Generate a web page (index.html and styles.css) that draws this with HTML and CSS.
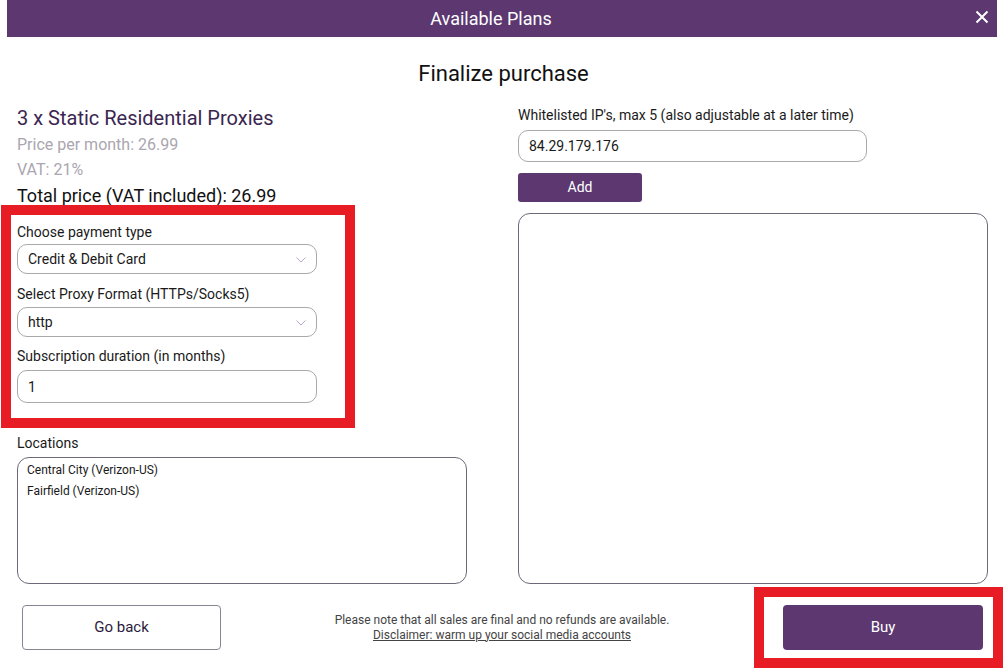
FILE: index.html
```html
<!doctype html>
<html>
	<head>
		<title>Available Plans</title>
		<meta charset="utf-8" />
		<meta name="viewport" content="width=device-width, initial-scale=1" />
		<link rel="stylesheet" href="styles.css">
	</head>

	<body>

		<div id="topbar">
			<span class="bartitle">Available Plans</span>
			<span class="closebtn">
				<svg width="14" height="14" viewBox="0 0 14 14"><path d="M1.5 1.5 L12.5 12.5 M12.5 1.5 L1.5 12.5" stroke="#fff" stroke-width="2" fill="none"/></svg>
			</span>
		</div>

		<h1 id="head">Finalize purchase</h1>

		<div id="cols">
			<div class="leftcol">
				<div class="plan">3 x Static Residential Proxies</div>
				<div class="price">Price per month: 26.99</div>
				<div class="vat">VAT: 21%</div>
				<div class="total">Total price (VAT included): 26.99</div>

				<div class="label first">Choose payment type</div>
				<div class="field select pay">
					<span>Credit &amp; Debit Card</span>
					<svg width="10" height="6" viewBox="0 0 10 6"><path d="M0.5 0.5 L5 5 L9.5 0.5" stroke="#b9a6cc" stroke-width="1" fill="none"/></svg>
				</div>

				<div class="label second">Select Proxy Format (HTTPs/Socks5)</div>
				<div class="field select fmt">
					<span>http</span>
					<svg width="10" height="6" viewBox="0 0 10 6"><path d="M0.5 0.5 L5 5 L9.5 0.5" stroke="#b9a6cc" stroke-width="1" fill="none"/></svg>
				</div>

				<div class="label third">Subscription duration (in months)</div>
				<div class="field months"><span>1</span></div>

				<div class="label locs">Locations</div>
				<div class="listbox">
					<div class="loc">Central City (Verizon-US)</div>
					<div class="loc">Fairfield (Verizon-US)</div>
				</div>
			</div>

			<div class="rightcol">
				<div class="label">Whitelisted IP's, max 5 (also adjustable at a later time)</div>
				<div class="field ip"><span>84.29.179.176</span></div>
				<div class="addbtn">Add</div>
				<div class="iplist"></div>
			</div>
		</div>

		<div id="footer">
			<div class="backbtn">Go back</div>
			<div class="note">
				<div>Please note that all sales are final and no refunds are available.</div>
				<div class="disclaimer">Disclaimer: warm up your social media accounts</div>
			</div>
			<div class="buybtn">Buy</div>
		</div>

		<!-- red highlight frames from the screenshot markup -->
		<div class="mark markform"></div>
		<div class="mark markbuy"></div>

	</body>
</html>
```

FILE: styles.css
```css
body {
	margin: 0;
	background-color: #fff;
	font-family: Roboto, "Liberation Sans", sans-serif;
	color: #1c1c1c;
	position: relative;
	height: 668px;
	overflow: hidden;
}

#topbar {
	margin: 0 6px 0 7px;
	height: 37px;
	background-color: #5c3770;
	color: #fff;
	display: flex;
	align-items: center;
	justify-content: center;
	position: relative;
}

.bartitle {
	font-size: 18px;
	margin-right: 22px;
}

.closebtn {
	position: absolute;
	right: 8px;
	top: 10px;
	width: 14px;
	height: 14px;
}

.closebtn svg {
	display: block;
}

#head {
	margin: 0;
	padding-top: 23px;
	height: 28px;
	line-height: 28px;
	font-size: 22px;
	font-weight: normal;
	text-align: center;
	color: #111;
	margin-left: 4px;
}

#cols {
	margin-top: 17px;
	padding-left: 17px;
	display: grid;
	grid-template-columns: 450px 470px;
	column-gap: 51px;
	align-items: start;
}

.plan {
	font-size: 20px;
	line-height: 26px;
	color: #3a2650;
}

.price {
	font-size: 16px;
	line-height: 28px;
	color: #aaa6af;
}

.vat {
	font-size: 16px;
	line-height: 22px;
	color: #aaa6af;
}

.total {
	font-size: 18px;
	line-height: 30px;
	color: #111;
}

.label {
	font-size: 14px;
	line-height: 20px;
	color: #1a1a1a;
}

.label.first { margin-top: 11px; }
.label.second { margin-top: 10px; }
.label.third { margin-top: 9px; }
.label.locs { margin-top: 30px; }

.field {
	box-sizing: border-box;
	border: 1px solid #a9a9a9;
	border-radius: 10px;
	display: flex;
	align-items: center;
	padding: 0 10px;
	font-size: 14px;
	color: #1a1a1a;
}

.select {
	width: 300px;
	height: 30px;
	justify-content: space-between;
}

.select svg {
	margin-top: 2px;
}

.pay { margin-top: 2px; }
.fmt { margin-top: 3px; }

.months {
	margin-top: 4px;
	width: 300px;
	height: 33px;
}

.listbox {
	box-sizing: border-box;
	margin-top: 4px;
	width: 450px;
	height: 127px;
	border: 1px solid #6f6878;
	border-radius: 12px;
	padding: 2px 9px;
}

.loc {
	font-size: 12px;
	line-height: 21px;
	color: #1a1a1a;
}

.ip {
	margin-top: 5px;
	width: 349px;
	height: 32px;
}

.addbtn {
	margin-top: 11px;
	width: 124px;
	height: 29px;
	line-height: 29px;
	text-align: center;
	background-color: #5c3770;
	color: #fff;
	font-size: 14px;
	border-radius: 3px;
}

.iplist {
	box-sizing: border-box;
	margin-top: 11px;
	width: 470px;
	height: 371px;
	border: 1px solid #6f6878;
	border-radius: 12px;
}

#footer {
	margin-top: 21px;
	padding: 0 20px 0 22px;
	display: flex;
	justify-content: space-between;
	align-items: center;
}

.backbtn {
	box-sizing: border-box;
	width: 199px;
	height: 45px;
	line-height: 43px;
	text-align: center;
	border: 1px solid #8a8392;
	border-radius: 4px;
	font-size: 15px;
	color: #2b1b3d;
}

.note {
	text-align: center;
	font-size: 12px;
	line-height: 15px;
	color: #444;
}

.disclaimer {
	text-decoration: underline;
}

.buybtn {
	width: 200px;
	height: 45px;
	line-height: 45px;
	text-align: center;
	background-color: #5c3770;
	color: #fff;
	font-size: 15px;
	border-radius: 4px;
}

.mark {
	position: absolute;
	box-sizing: border-box;
	border: 10px solid #e81c24;
}

.markform {
	left: 1px;
	top: 205px;
	width: 354px;
	height: 223px;
}

.markbuy {
	left: 754px;
	top: 587px;
	width: 249px;
	height: 81px;
}
```
